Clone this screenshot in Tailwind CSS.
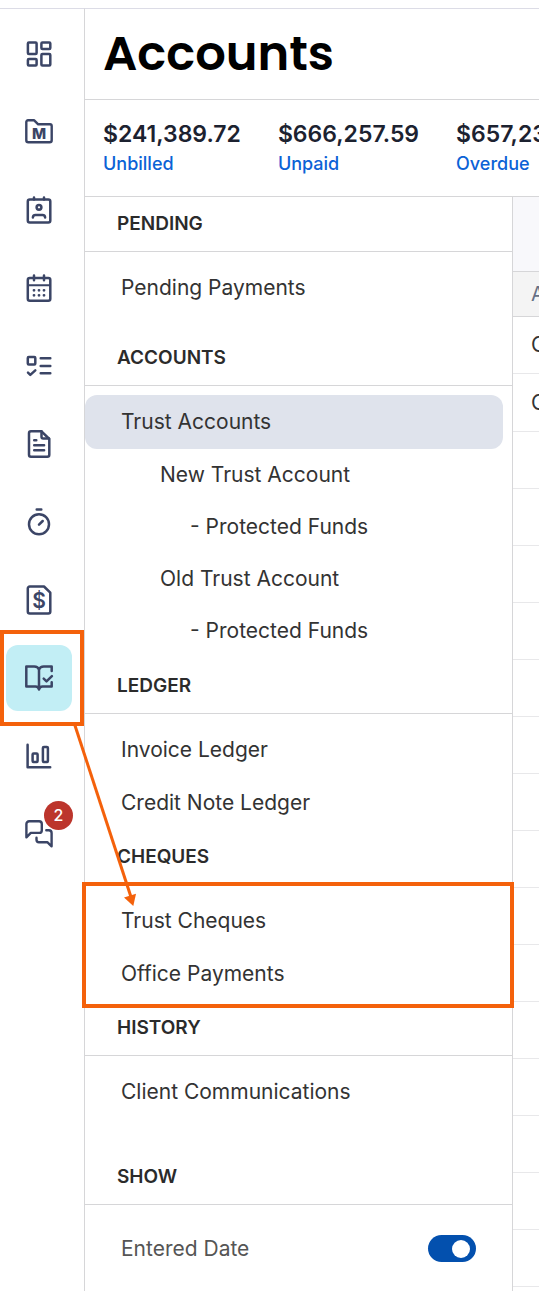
<!DOCTYPE html>
<html lang="en">
<head>
    <meta charset="UTF-8" />
    <meta name="viewport" content="width=device-width, initial-scale=1" />
    <title>Accounts</title>
    <script src="https://cdn.jsdelivr.net/npm/@tailwindcss/browser@4"></script>
</head>
<body class="bg-white font-['Inter',sans-serif] text-[#333333] overflow-x-hidden">
    <div class="relative flex min-h-screen overflow-hidden pt-2">

        <!-- Icon rail -->
        <nav aria-label="Main" class="flex w-[85px] shrink-0 flex-col gap-3 border-t border-r border-t-[#dcdce6] border-r-[#d6d6d8] pt-3 pl-[6px] text-[#3b4566]">
            <a href="#" aria-label="Dashboard" class="flex size-[66px] items-center justify-center rounded-xl">
                <svg class="size-[30px]" viewBox="0 0 30 30" fill="none" stroke="currentColor" stroke-width="2.5" stroke-linecap="round" stroke-linejoin="round">
                    <rect x="3.9" y="3.6" width="8.7" height="11.3" rx="1" />
                    <rect x="17.4" y="3.6" width="8.9" height="6.3" rx="1" />
                    <rect x="3.9" y="20.1" width="8.7" height="6.4" rx="1" />
                    <rect x="17.4" y="15.1" width="8.9" height="11.4" rx="1" />
                </svg>
            </a>
            <a href="#" aria-label="Matters" class="flex size-[66px] items-center justify-center rounded-xl">
                <svg class="size-[30px]" viewBox="0 0 30 30" fill="none" stroke="currentColor" stroke-width="2.4" stroke-linecap="round" stroke-linejoin="round">
                    <path d="M2.3 23.3V5a1.7 1.7 0 0 1 1.7-1.7h6.2L14.2 7.3H26A1.7 1.7 0 0 1 27.7 9v14.3A2 2 0 0 1 25.7 25.3H4.3a2 2 0 0 1-2-2z" />
                    <text x="15" y="22.3" text-anchor="middle" font-size="15" font-weight="800" fill="currentColor" stroke="none">M</text>
                </svg>
            </a>
            <a href="#" aria-label="Contacts" class="flex size-[66px] items-center justify-center rounded-xl">
                <svg class="size-[30px]" viewBox="0 0 30 30" fill="none" stroke="currentColor" stroke-width="2.5" stroke-linecap="round" stroke-linejoin="round">
                    <rect x="3.8" y="4.5" width="22.5" height="23" rx="2" />
                    <path d="M10 2.5v2M20 2.5v2M8.9 22.5v-.3a2.6 2.6 0 0 1 2.6-2.2h7a2.6 2.6 0 0 1 2.6 2.2v.3" />
                    <circle cx="15" cy="12.3" r="2.4" />
                </svg>
            </a>
            <a href="#" aria-label="Calendar" class="flex size-[66px] items-center justify-center rounded-xl">
                <svg class="size-[30px]" viewBox="0 0 30 30" fill="none" stroke="currentColor" stroke-width="2.5" stroke-linecap="round" stroke-linejoin="round">
                    <rect x="3.8" y="4.9" width="22.5" height="22.8" rx="2" />
                    <path d="M4 12.3h22" stroke-width="2" />
                    <path d="M10 2.5v4.8M20 2.5v4.8" />
                    <path d="M10 17.3h.01M15 17.3h.01M20 17.3h.01M10 22.3h.01M15 22.3h.01M20 22.3h.01" stroke-width="2.8" />
                </svg>
            </a>
            <a href="#" aria-label="Tasks" class="flex size-[66px] items-center justify-center rounded-xl">
                <svg class="size-[30px]" viewBox="0 0 30 30" fill="none" stroke="currentColor" stroke-width="2.5" stroke-linecap="round" stroke-linejoin="round">
                    <rect x="3.8" y="6.1" width="7.5" height="7.5" rx="1" />
                    <path d="M16.7 7.3h9.6M16.7 15h9.6M16.7 22.3h9.6M4 21.7l2.3 2.2 5-4.6" />
                </svg>
            </a>
            <a href="#" aria-label="Documents" class="flex size-[66px] items-center justify-center rounded-xl">
                <svg class="size-[30px]" viewBox="0 0 30 30" fill="none" stroke="currentColor" stroke-width="2.5" stroke-linecap="round" stroke-linejoin="round">
                    <path d="M17.5 2.3H7a2 2 0 0 0-2 2v21.4a2 2 0 0 0 2 2h16.3a2 2 0 0 0 2-2V10z" />
                    <path d="M17.5 2.3v5.4a1.8 1.8 0 0 0 1.8 1.8h5.7M10.2 11.3h2.1M10.2 16.3h9.9M10.2 21.3h9.9" />
                </svg>
            </a>
            <a href="#" aria-label="Timers" class="flex size-[66px] items-center justify-center rounded-xl">
                <svg class="size-[30px]" viewBox="0 0 30 30" fill="none" stroke="currentColor" stroke-width="2.5" stroke-linecap="round">
                    <circle cx="15" cy="17.3" r="10" />
                    <path d="M15 17.7l3.7-3.7M12.7 2.4h4.6" />
                </svg>
            </a>
            <a href="#" aria-label="Billing" class="flex size-[66px] items-center justify-center rounded-xl">
                <svg class="size-[30px]" viewBox="0 0 30 30" fill="none" stroke="currentColor" stroke-width="2.5" stroke-linecap="round" stroke-linejoin="round">
                    <path d="M20 1.5H5.8a2 2 0 0 0-2 2v23.1a2 2 0 0 0 2 2h18.5a2 2 0 0 0 2-2V7.7z" />
                    <text x="15" y="22.7" text-anchor="middle" font-size="21" font-weight="600" fill="currentColor" stroke="none">$</text>
                </svg>
            </a>
            <a href="#" aria-label="Accounts" aria-current="page" class="flex size-[66px] items-center justify-center rounded-xl bg-[#c2eef5]">
                <svg class="size-[30px]" viewBox="0 0 30 30" fill="none" stroke="currentColor" stroke-width="2.5" stroke-linecap="round" stroke-linejoin="round">
                    <path d="M15 6.5v20M15 6.5c-.7-2-2.5-3.1-4.8-3.1H2.3v20.2h9.2c1.8 0 3 1 3.5 2.9.5-1.9 1.7-2.9 3.5-2.9h9.2v-4.3M15 6.5c.7-2 2.5-3.1 4.8-3.1h7.9v4.6" />
                    <path d="M19.7 15.7l2.8 2.7 5.4-5.2" />
                </svg>
            </a>
            <a href="#" aria-label="Reports" class="flex size-[66px] items-center justify-center rounded-xl">
                <svg class="size-[30px]" viewBox="0 0 30 30" fill="none" stroke="currentColor" stroke-width="2.5" stroke-linecap="round" stroke-linejoin="round">
                    <path d="M3.6 3.7v22.6h22.6" />
                    <rect x="8.6" y="12.6" width="5" height="8.5" rx="1" />
                    <rect x="18.9" y="5.9" width="5" height="15.2" rx="1" />
                </svg>
            </a>
            <a href="#" aria-label="Messages, 2 unread" class="relative flex size-[66px] items-center justify-center rounded-xl">
                <svg class="size-[30px]" viewBox="0 0 30 30" fill="none" stroke="currentColor" stroke-width="2.4" stroke-linecap="round" stroke-linejoin="round">
                    <path d="M2.4 18.3V5a2.7 2.7 0 0 1 2.7-2.7h10a2.7 2.7 0 0 1 2.7 2.7v6.2a2.7 2.7 0 0 1-2.7 2.7H6.8z" />
                    <path d="M22.3 11.3h2.6a2.7 2.7 0 0 1 2.7 2.7v13.3l-4.3-4.1H15a2.5 2.5 0 0 1-2.5-2.5v-1.9" />
                </svg>
                <span class="absolute top-0 -right-px flex size-[29px] items-center justify-center rounded-full bg-[#bc352c] pb-0.5 text-base font-medium text-white">2</span>
            </a>
        </nav>

        <div class="flex min-w-0 flex-1 flex-col border-t border-[#dcdce6]">
            <header class="flex h-[91px] shrink-0 items-center border-b border-[#d6d6d8] pl-[18px]">
                <h1 class="font-['Poppins','Inter',sans-serif] text-5xl leading-none font-semibold text-black">Accounts</h1>
            </header>

            <!-- Totals -->
            <section aria-label="Totals" class="flex h-[97px] shrink-0 items-start gap-[37px] overflow-hidden border-b border-[#d6d6d8] pt-[18px] pl-[18px] whitespace-nowrap">
                <div>
                    <p class="text-[23px] leading-8 font-semibold text-[#1c2230]">$241,389.72</p>
                    <a href="#" class="block text-lg leading-7 font-medium text-[#0b62d6]">Unbilled</a>
                </div>
                <div>
                    <p class="text-[23px] leading-8 font-semibold text-[#1c2230]">$666,257.59</p>
                    <a href="#" class="block text-lg leading-7 font-medium text-[#0b62d6]">Unpaid</a>
                </div>
                <div>
                    <p class="text-[23px] leading-8 font-semibold text-[#1c2230]">$657,23</p>
                    <a href="#" class="block text-lg leading-7 font-medium text-[#0b62d6]">Overdue</a>
                </div>
            </section>

            <div class="flex flex-1">
                <!-- Account menu -->
                <aside class="w-[428px] shrink-0 border-r border-[#d6d6d8] text-[21px]">
                    <h2 class="flex h-[55px] items-center border-b border-[#d6d6d8] pl-8 text-[19px] font-semibold text-[#2b2b2b]">PENDING</h2>
                    <ul class="pt-[9px] pb-[17px]">
                        <li><a href="#" class="flex h-[53px] items-center pl-9">Pending Payments</a></li>
                    </ul>

                    <h2 class="flex h-[55px] items-center border-b border-[#d6d6d8] pl-8 text-[19px] font-semibold text-[#2b2b2b]">ACCOUNTS</h2>
                    <ul class="pt-[9px] pb-[2px]">
                        <li><a href="#" class="mr-[9px] flex h-[54px] items-center rounded-xl bg-[#dfe3ec] pl-9">Trust Accounts</a></li>
                        <li><a href="#" class="flex h-[52px] items-center pl-[75px]">New Trust Account</a></li>
                        <li><a href="#" class="flex h-[52px] items-center pl-[105px]">- Protected Funds</a></li>
                        <li><a href="#" class="flex h-[52px] items-center pl-[75px]">Old Trust Account</a></li>
                        <li><a href="#" class="flex h-[52px] items-center pl-[105px]">- Protected Funds</a></li>
                    </ul>

                    <h2 class="flex h-[55px] items-center border-b border-[#d6d6d8] pl-8 text-[19px] font-semibold text-[#2b2b2b]">LEDGER</h2>
                    <ul class="pt-[9px] pb-px">
                        <li><a href="#" class="flex h-[53px] items-center pl-9">Invoice Ledger</a></li>
                        <li><a href="#" class="flex h-[53px] items-center pl-9">Credit Note Ledger</a></li>
                    </ul>

                    <h2 class="flex h-[55px] items-center border-b border-[#d6d6d8] pl-8 text-[19px] font-semibold text-[#2b2b2b]">CHEQUES</h2>
                    <ul class="pt-[9px] pb-px">
                        <li><a href="#" class="flex h-[53px] items-center pl-9">Trust Cheques</a></li>
                        <li><a href="#" class="flex h-[53px] items-center pl-9">Office Payments</a></li>
                    </ul>

                    <h2 class="flex h-[55px] items-center border-b border-[#d6d6d8] pl-8 text-[19px] font-semibold text-[#2b2b2b]">HISTORY</h2>
                    <ul class="pt-[9px] pb-8">
                        <li><a href="#" class="flex h-[53px] items-center pl-9">Client Communications</a></li>
                    </ul>

                    <h2 class="flex h-[55px] items-center border-b border-[#d6d6d8] pl-8 text-[19px] font-semibold text-[#2b2b2b]">SHOW</h2>
                    <div class="flex items-center justify-between pt-7 pr-9 pl-9">
                        <label for="entered-date" class="text-[#555555]">Entered Date</label>
                        <input id="entered-date" type="checkbox" role="switch" checked class="flex h-[27px] w-12 appearance-none items-center rounded-full bg-[#9aa3b2] pl-[6px] before:size-[18px] before:rounded-full before:bg-white before:content-[''] checked:bg-[#0350ae] checked:pl-6" />
                    </div>
                </aside>

                <!-- Account list, runs off the right edge -->
                <main class="min-w-0 flex-1 overflow-hidden">
                    <div class="h-[74px] bg-[#f8f8fb]"></div>
                    <table class="w-full table-fixed border-separate border-spacing-0 text-left text-[21px] whitespace-nowrap">
                        <thead>
                            <tr class="h-[46px] bg-[#f4f4f4]">
                                <th class="border-y border-[#d6d6d8] p-0 pl-[18px] text-xl font-normal text-[#667085]">A</th>
                            </tr>
                        </thead>
                        <tbody>
                            <tr class="h-[57px]"><td class="border-b border-[#e8e8ea] p-0 pl-[18px]">C</td></tr>
                            <tr class="h-[58px]"><td class="border-b border-[#e8e8ea] p-0 pl-[18px]">C</td></tr>
                            <tr class="h-[57px]"><td class="border-b border-[#e8e8ea]"></td></tr>
                            <tr class="h-[57px]"><td class="border-b border-[#e8e8ea]"></td></tr>
                            <tr class="h-[57px]"><td class="border-b border-[#e8e8ea]"></td></tr>
                            <tr class="h-[57px]"><td class="border-b border-[#e8e8ea]"></td></tr>
                            <tr class="h-[57px]"><td class="border-b border-[#e8e8ea]"></td></tr>
                            <tr class="h-[57px]"><td class="border-b border-[#e8e8ea]"></td></tr>
                            <tr class="h-[57px]"><td class="border-b border-[#e8e8ea]"></td></tr>
                            <tr class="h-[57px]"><td class="border-b border-[#e8e8ea]"></td></tr>
                            <tr class="h-[57px]"><td class="border-b border-[#e8e8ea]"></td></tr>
                            <tr class="h-[57px]"><td class="border-b border-[#e8e8ea]"></td></tr>
                            <tr class="h-[57px]"><td class="border-b border-[#e8e8ea]"></td></tr>
                            <tr class="h-[57px]"><td class="border-b border-[#e8e8ea]"></td></tr>
                            <tr class="h-[57px]"><td class="border-b border-[#e8e8ea]"></td></tr>
                            <tr class="h-[57px]"><td class="border-b border-[#e8e8ea]"></td></tr>
                            <tr class="h-[57px]"><td class="border-b border-[#e8e8ea]"></td></tr>
                        </tbody>
                    </table>
                </main>
            </div>
        </div>

        <!-- Callouts: rail icon -> cheque links -->
        <div class="pointer-events-none absolute top-[630px] left-0 h-24 w-[84px] border-4 border-[#f4610b]"></div>
        <div class="pointer-events-none absolute top-[882px] left-[82px] h-[126px] w-[432px] border-4 border-[#f4610b]"></div>
        <svg class="pointer-events-none absolute top-[720px] left-[70px] h-[190px] w-[70px]" viewBox="0 0 70 190" fill="none">
            <path d="M4.5 4L61 177" stroke="#f4610b" stroke-width="3" />
            <path d="M54 177.5L66 173.7L63.3 186z" fill="#f4610b" />
        </svg>
    </div>
</body>
</html>
